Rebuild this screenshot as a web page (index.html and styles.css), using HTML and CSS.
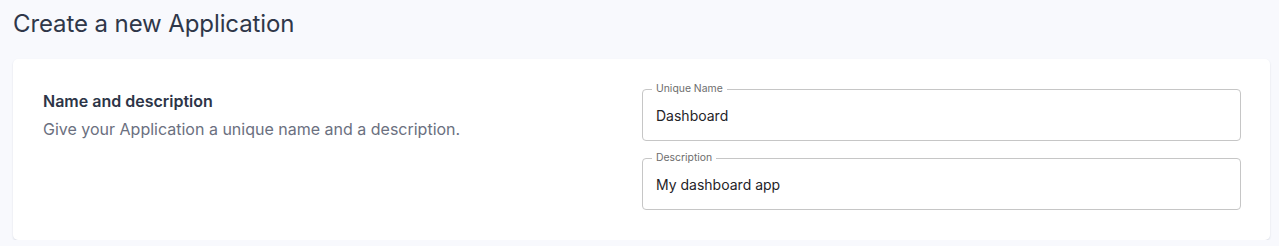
FILE: index.html
```html
<!DOCTYPE html>
<html>
<head>
<meta charset="utf-8">
<link rel="stylesheet" href="styles.css">
</head>
<body>
<div class="page">
  <h1 class="title">Create a new Application</h1>
  <section class="card">
    <div class="intro">
      <h2 class="intro-heading">Name and description</h2>
      <p class="intro-text">Give your Application a unique name and a description.</p>
    </div>
    <div class="fields">
      <fieldset class="field">
        <legend class="field-label">Unique Name</legend>
        <div class="field-value">Dashboard</div>
      </fieldset>
      <fieldset class="field">
        <legend class="field-label">Description</legend>
        <div class="field-value">My dashboard app</div>
      </fieldset>
    </div>
  </section>
</div>
</body>
</html>
```

FILE: styles.css
```css
html, body {
  margin: 0;
  padding: 0;
  background: #f8f9fd;
  font-family: Inter, "Noto Sans", sans-serif;
}

.page {
  padding: 8px 9px 0 13px;
}

.title {
  margin: 0;
  font-size: 24px;
  line-height: 32px;
  font-weight: 400;
  color: #2f3749;
  letter-spacing: -0.1px;
}

.card {
  margin-top: 19px;
  background: #ffffff;
  border-radius: 5px;
  box-shadow: 0 1px 2px rgba(30, 40, 80, 0.14);
  padding: 30px 29px 30px 30px;
  display: grid;
  grid-template-columns: 599px 1fr;
  height: 181px;
  box-sizing: border-box;
}

.intro {
  padding-top: 0;
}

.intro-heading {
  margin: 0;
  font-size: 16px;
  line-height: 20px;
  font-weight: 600;
  color: #2d3547;
  margin-top: 2px;
}

.intro-text {
  margin: 8px 0 0;
  font-size: 16px;
  line-height: 20px;
  color: #6b7080;
}

.fields {
  display: flex;
  flex-direction: column;
  gap: 10px;
  margin-top: -7px;
}

.field {
  margin: 0;
  border: 1px solid #c6c6c6;
  border-radius: 4px;
  padding: 0 13px;
  height: 59px;
  box-sizing: border-box;
  min-width: 0;
}

.field-label {
  font-size: 10.4px;
  line-height: 14px;
  color: #6d6d6d;
  padding: 0 4px;
  margin-left: -4px;
}

.field-value {
  font-size: 14px;
  line-height: 20px;
  color: #1f2328;
  padding-top: 10px;
}
```
